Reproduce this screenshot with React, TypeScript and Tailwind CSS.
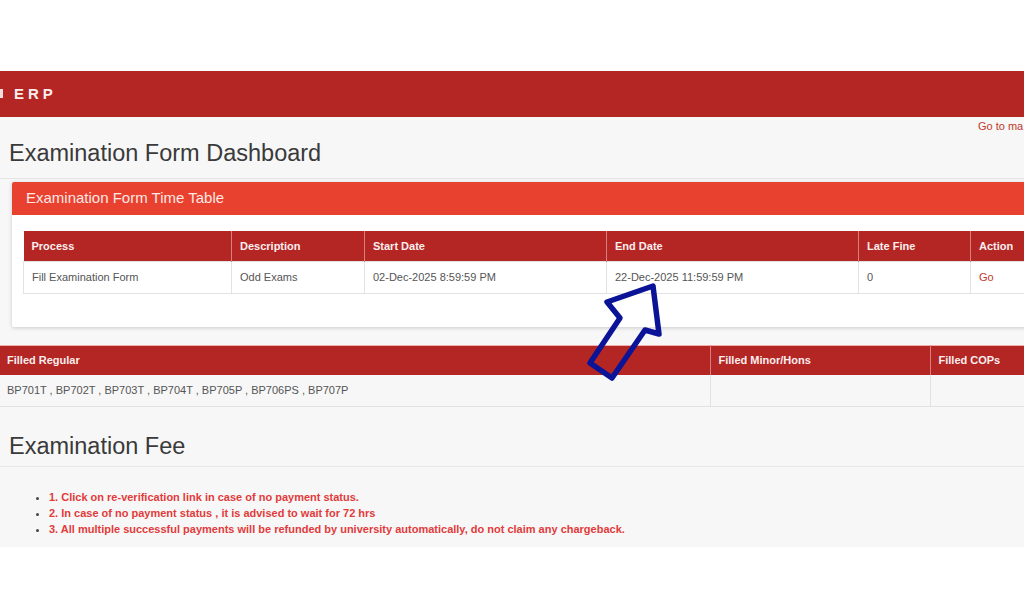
import React from "react";

const font = { fontFamily: '"Liberation Sans", Arial, Helvetica, sans-serif' };

export default function App() {
  const cols1 = [
    { h: "Process", v: "Fill Examination Form", w: "w-[208px]" },
    { h: "Description", v: "Odd Exams", w: "w-[133px]" },
    { h: "Start Date", v: "02-Dec-2025 8:59:59 PM", w: "w-[242px]" },
    { h: "End Date", v: "22-Dec-2025 11:59:59 PM", w: "w-[252px]" },
    { h: "Late Fine", v: "0", w: "w-[112px]" },
  ];
  return (
    <div className="relative w-[1024px] h-[614px] overflow-hidden bg-white" style={font}>
      <div className="h-[71px] bg-white" />
      <div className="h-[46px] bg-[#b32624] flex items-center relative">
        <div className="absolute left-0 top-[18px] w-[3px] h-[9px] bg-[#f3dede]" />
        <span className="ml-[14px] text-[15px] font-bold tracking-[4px] text-[#fbeeee]">ERP</span>
      </div>
      <div className="bg-[#f7f7f7] h-[430px] flex flex-col">
        <div className="h-[18px] relative">
          <span className="absolute left-[978px] top-[1px] text-[11px] text-[#c0392b] whitespace-nowrap">Go to ma</span>
        </div>
        <div className="pl-[9px] pt-[2px] pb-[9px] border-b border-[#e4e4e4]">
          <h1 className="text-[23.5px] leading-[32px] text-[#3a3a3a] font-normal">Examination Form Dashboard</h1>
        </div>
        <div className="ml-[12px] mt-[3px] w-[1040px] bg-white shadow-[0_1px_4px_rgba(0,0,0,0.18)] rounded-[2px]">
          <div className="h-[33px] bg-[#e9412f] flex items-center pl-[14px] rounded-t-[2px]">
            <span className="text-[15px] text-[#fde8e4]">Examination Form Time Table</span>
          </div>
          <div className="pt-[16px] pl-[11px] pb-[33px]">
            <table className="table-fixed border-collapse text-[11px] w-[1037px]">
              <thead>
                <tr className="h-[30px] bg-[#b32624] text-[#fbeeee]">
                  {cols1.map((c) => (
                    <th key={c.h} className={`${c.w} text-left font-bold pl-[8px] border-r border-[#d9807e]`}>{c.h}</th>
                  ))}
                  <th className="text-left font-bold pl-[8px]">Action</th>
                </tr>
              </thead>
              <tbody>
                <tr className="h-[32px] text-[#555]">
                  {cols1.map((c) => (
                    <td key={c.h} className="pl-[8px] border border-[#e2e2e2] whitespace-nowrap">{c.v}</td>
                  ))}
                  <td className="pl-[8px] border border-[#e2e2e2] text-[#c0392b]">Go</td>
                </tr>
              </tbody>
            </table>
          </div>
        </div>
        <div className="mt-[18px]">
          <table className="table-fixed border-collapse text-[11px] w-[1100px]">
            <thead>
              <tr className="h-[30px] bg-[#b32624] text-[#fbeeee] border-t border-[#f0b0ab]">
                <th className="w-[710px] text-left font-bold pl-[7px] border-r border-[#d9807e]">Filled Regular</th>
                <th className="w-[220px] text-left font-bold pl-[8px] border-r border-[#d9807e]">Filled Minor/Hons</th>
                <th className="text-left font-bold pl-[8px]">Filled COPs</th>
              </tr>
            </thead>
            <tbody>
              <tr className="h-[31px] text-[#555] border-b border-[#e2e2e2]">
                <td className="pl-[7px] border-r border-[#e2e2e2] whitespace-nowrap">BP701T , BP702T , BP703T , BP704T , BP705P , BP706PS , BP707P</td>
                <td className="border-r border-[#e2e2e2]"></td>
                <td></td>
              </tr>
            </tbody>
          </table>
        </div>
        <div className="pl-[9px] pt-[23px] pb-[4px] border-b border-[#e8e8e8]">
          <h2 className="text-[23.5px] leading-[32px] text-[#3a3a3a] font-normal">Examination Fee</h2>
        </div>
        <ul className="mt-[22px] pl-[49px] list-disc text-[11px] leading-[16px] font-bold text-[#e23b3b] marker:text-[#444]">
          <li>1. Click on re-verification link in case of no payment status.</li>
          <li>2. In case of no payment status , it is advised to wait for 72 hrs</li>
          <li>3. All multiple successful payments will be refunded by university automatically, do not claim any chargeback.</li>
        </ul>
      </div>
      <svg className="absolute left-0 top-0 pointer-events-none" width="1024" height="614" viewBox="0 0 1024 614">
        <path
          d="M653 286 L659 334 L645 330 L612 378 L590 363 L620 318 L607 302 Z"
          fill="none"
          stroke="#0b1497"
          strokeWidth="5.5"
          strokeLinejoin="round"
        />
      </svg>
    </div>
  );
}
